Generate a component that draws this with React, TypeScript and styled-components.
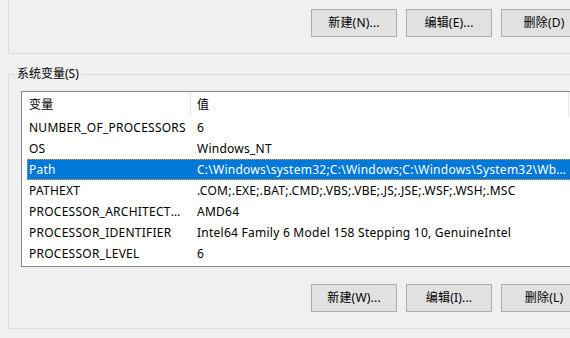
import React from 'react';
import styled, {createGlobalStyle} from 'styled-components';

const GlobalStyle = createGlobalStyle`
    html, body {
        margin: 0;
        padding: 0;
        background: #f0f0f0;
        overflow: hidden;
    }
    body {
        font-family: 'Noto Sans', 'Noto Sans CJK SC', sans-serif;
        font-size: 12px;
        color: #000;
    }
`;

const Page = styled.div`
    width: 606px;
    padding: 0 8px;
    box-sizing: border-box;
`;

const TopGroup = styled.div`
    border: 1px solid #dcdcdc;
    border-top: none;
    padding: 9px 10px 16px;
`;

const ButtonRow = styled.div`
    display: flex;
    justify-content: flex-end;
    gap: 9px;
`;

const Button = styled.button`
    width: 86px;
    height: 28px;
    padding: 0;
    background: #e1e1e1;
    border: 1px solid #adadad;
    font: inherit;
    color: #000;
    line-height: 26px;
    letter-spacing: 0.2px;
    cursor: pointer;
`;

const GroupBox = styled.fieldset`
    margin: 12px 0 0;
    padding: 0 10px 16px 12px;
    border: 1px solid #dcdcdc;
    min-width: 0;
`;

const Legend = styled.legend`
    margin-left: -6px;
    padding: 0 2px;
    line-height: 16px;
`;

const ListView = styled.div`
    margin-top: 9px;
    margin-bottom: 17px;
    border: 1px solid #828790;
    background: #fff;
    padding-bottom: 2px;
    overflow: hidden;
    letter-spacing: 0.25px;
`;

const Header = styled.div`
    display: grid;
    grid-template-columns: 169px 378px;
    height: 25px;
`;

const HeaderCell = styled.div<{ $pad: number }>`
    border-right: 1px solid #e5e5e5;
    padding-left: ${props => props.$pad}px;
    line-height: 25px;
    white-space: nowrap;
    overflow: hidden;
`;

const Row = styled.div<{ $selected?: boolean }>`
    display: grid;
    grid-template-columns: 164px 378px;
    height: 21px;
    margin-left: 5px;
    line-height: 21px;
    background: ${props => props.$selected ? '#0078d7' : 'transparent'};
    color: ${props => props.$selected ? '#fff' : '#000'};
    outline: ${props => props.$selected ? '1px dotted #f39a3c' : 'none'};
    outline-offset: -1px;
`;

const Cell = styled.div<{ $first?: boolean }>`
    padding: ${props => props.$first ? '0 2px 0 2px' : '0 1px 0 6px'};
    white-space: nowrap;
    overflow: hidden;
    text-overflow: ellipsis;
`;

const variables = [
    {name: 'NUMBER_OF_PROCESSORS', value: '6'},
    {name: 'OS', value: 'Windows_NT'},
    {
        name: 'Path',
        value: 'C:\\Windows\\system32;C:\\Windows;C:\\Windows\\System32\\Wbem;C:\\Windows\\System32\\WindowsPowerShell\\v1.0\\',
    },
    {name: 'PATHEXT', value: '.COM;.EXE;.BAT;.CMD;.VBS;.VBE;.JS;.JSE;.WSF;.WSH;.MSC'},
    {name: 'PROCESSOR_ARCHITECTURE', value: 'AMD64'},
    {name: 'PROCESSOR_IDENTIFIER', value: 'Intel64 Family 6 Model 158 Stepping 10, GenuineIntel'},
    {name: 'PROCESSOR_LEVEL', value: '6'},
];

const App: React.FC = () => {
    const selected = 'Path';

    return (
        <>
            <GlobalStyle/>
            <Page>
                <TopGroup>
                    <ButtonRow>
                        <Button>新建(N)...</Button>
                        <Button>编辑(E)...</Button>
                        <Button>删除(D)</Button>
                    </ButtonRow>
                </TopGroup>
                <GroupBox>
                    <Legend>系统变量(S)</Legend>
                    <ListView>
                        <Header>
                            <HeaderCell $pad={7}>变量</HeaderCell>
                            <HeaderCell $pad={6}>值</HeaderCell>
                        </Header>
                        {variables.map(v => (
                            <Row key={v.name} $selected={v.name === selected}>
                                <Cell $first>{v.name}</Cell>
                                <Cell>{v.value}</Cell>
                            </Row>
                        ))}
                    </ListView>
                    <ButtonRow>
                        <Button>新建(W)...</Button>
                        <Button>编辑(I)...</Button>
                        <Button>删除(L)</Button>
                    </ButtonRow>
                </GroupBox>
            </Page>
        </>
    );
};

export default App;
